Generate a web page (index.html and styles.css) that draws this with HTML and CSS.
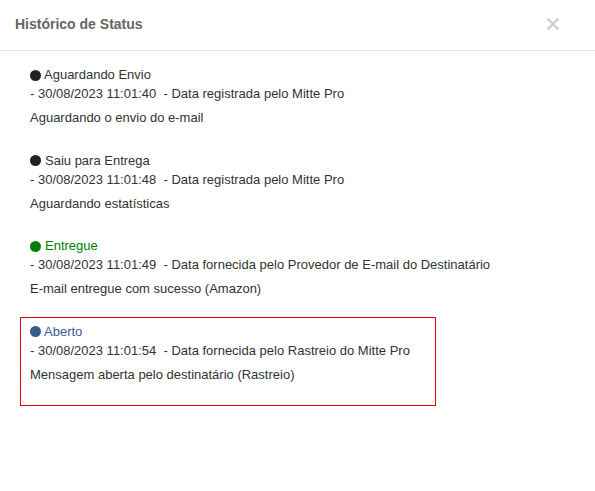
FILE: index.html
```html
<!DOCTYPE html>
<html lang="pt-BR">
<head>
<meta charset="utf-8">
<title>Histórico de Status</title>
<link rel="stylesheet" href="styles.css">
</head>
<body>
<div class="modal">
  <div class="modal-header">
    <h4 class="modal-title">Histórico de Status</h4>
    <button class="close" aria-label="Fechar">
      <svg width="12" height="12" viewBox="0 0 12 12"><path d="M1.5 1.5 L10.5 10.5 M10.5 1.5 L1.5 10.5" stroke="#cfcfcf" stroke-width="2.4" stroke-linecap="square"/></svg>
    </button>
  </div>
  <div class="modal-body">
    <div class="item">
      <div class="status"><span class="dot dot-black"></span>Aguardando Envio</div>
      <div class="date">- 30/08/2023 11:01:40&nbsp; - Data registrada pelo Mitte Pro</div>
      <div class="desc">Aguardando o envio do e-mail</div>
    </div>
    <div class="item">
      <div class="status"><span class="dot dot-black wide"></span>Saiu para Entrega</div>
      <div class="date">- 30/08/2023 11:01:48&nbsp; - Data registrada pelo Mitte Pro</div>
      <div class="desc">Aguardando estatísticas</div>
    </div>
    <div class="item">
      <div class="status status-green"><span class="dot dot-green wide"></span>Entregue</div>
      <div class="date">- 30/08/2023 11:01:49&nbsp; - Data fornecida pelo Provedor de E-mail do Destinatário</div>
      <div class="desc">E-mail entregue com sucesso (Amazon)</div>
    </div>
    <div class="item item-active">
      <div class="status status-blue"><span class="dot dot-blue"></span>Aberto</div>
      <div class="date">- 30/08/2023 11:01:54&nbsp; - Data fornecida pelo Rastreio do Mitte Pro</div>
      <div class="desc">Mensagem aberta pelo destinatário (Rastreio)</div>
    </div>
  </div>
</div>
</body>
</html>
```

FILE: styles.css
```css
* { box-sizing: border-box; }
html, body {
  margin: 0;
  padding: 0;
  background: #fff;
}
body {
  font-family: "Liberation Sans", Arial, sans-serif;
  font-size: 13px;
  color: #333;
}
.modal {
  width: 595px;
}
.modal-header {
  height: 51px;
  border-bottom: 1px solid #e5e5e5;
  display: flex;
  align-items: center;
  justify-content: space-between;
  padding: 0 36px 2px 15px;
}
.modal-title {
  margin: 0;
  font-size: 14px;
  font-weight: bold;
  color: #666;
  line-height: 20px;
}
.close {
  border: 0;
  background: none;
  padding: 0;
  width: 12px;
  height: 12px;
  display: flex;
  cursor: pointer;
}
.modal-body {
  padding-top: 9px;
}
.item {
  margin-left: 20px;
  width: 416px;
  border: 1px solid transparent;
  padding: 5px 9px 16.67px;
  white-space: nowrap;
}
.item-active {
  border-color: #e00000;
  padding-bottom: 20px;
}
.status {
  line-height: 18px;
  display: flex;
  align-items: center;
}
.status-green { color: #008000; }
.status-blue { color: #3a5a99; }
.dot {
  display: inline-block;
  width: 11px;
  height: 11px;
  border-radius: 50%;
  margin-right: 3px;
}
.dot.wide { margin-right: 4px; }
.dot-black { background: #222; }
.dot-green { background: #0a7d0a; }
.dot-blue { background: #375a8e; }
.date {
  line-height: 20px;
}
.desc {
  margin-top: 4px;
  line-height: 20px;
}
```
